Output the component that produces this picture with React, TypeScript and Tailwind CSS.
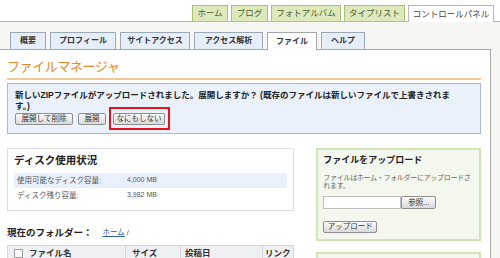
import React from "react";

const font = { fontFamily: '"Liberation Sans", "Noto Sans CJK JP", sans-serif' };

function TopTab({ label, w, active }: { label: string; w: string; active?: boolean }) {
  return (
    <div
      className={
        "flex items-center justify-center text-[8.5px] leading-none border border-b-0 " +
        w +
        " " +
        (active
          ? "h-[17px] -mb-px relative z-10 bg-white border-[#b8b8b8] text-[#444]"
          : "h-[16px] bg-[#dce9bb] border-[#a6c273] text-[#4d5d33]")
      }
    >
      {label}
    </div>
  );
}

function SubTab({ label, active, w }: { label: string; active?: boolean; w: string }) {
  return (
    <div
      className={
        "flex items-center justify-center text-[8px] font-bold leading-none border border-b-0 " +
        w +
        " " +
        (active
          ? "h-[18px] -mb-px relative z-10 bg-white border-[#a8a8a8] text-[#333]"
          : "h-[17px] bg-[#e6eefa] border-[#9aa7b8] text-[#333]")
      }
    >
      {label}
    </div>
  );
}

function Btn({ label, className = "" }: { label: string; className?: string }) {
  return (
    <div
      className={
        "flex items-center justify-center text-[7.5px] leading-none text-[#333] bg-gradient-to-b from-[#fbfbfb] to-[#dadada] border border-[#8f8f8f] rounded-[2px] " +
        className
      }
    >
      {label}
    </div>
  );
}

export default function App() {
  return (
    <div className="w-[500px] h-[258px] overflow-hidden bg-white" style={font}>
      {/* top tabs */}
      <div className="h-[22px] flex items-end justify-end gap-[3px] pr-[6px] border-b border-[#b8b8b8]">
        <TopTab label="ホーム" w="w-[36px]" />
        <TopTab label="ブログ" w="w-[37px]" />
        <TopTab label="フォトアルバム" w="w-[70px]" />
        <TopTab label="タイプリスト" w="w-[61px]" />
        <TopTab label="コントロールパネル" w="w-[86px]" active />
      </div>
      {/* sub tabs band */}
      <div className="bg-[#f6f7f2] h-[27px] flex items-end gap-[4px] pl-[10px]">
        <SubTab label="概要" w="w-[36px]" />
        <SubTab label="プロフィール" w="w-[66px]" />
        <SubTab label="サイトアクセス" w="w-[70px]" />
        <SubTab label="アクセス解析" w="w-[69px]" />
        <SubTab label="ファイル" w="w-[50px]" active />
        <SubTab label="ヘルプ" w="w-[44px]" />
      </div>
      <div className="flex bg-[#f6f7f2]">
        {/* content */}
        <div className="w-[491px] h-[220px] bg-white border-t border-r border-[#a8a8a8] pl-[7px] pr-[9px] pt-[9px]">
          <div className="text-[13px] leading-[16px] tracking-[-0.4px] text-[#e8872a] border-b-2 border-[#f3c897] pb-[3px]">
            ファイルマネージャ
          </div>
          <div className="mt-[3px] h-[51px] bg-[#eaf1fb] border border-[#a9b9d1] pl-[7px] pr-[4px] pt-[6px]">
            <div className="text-[8.5px] leading-[11px] font-bold text-[#222]">
              <div className="whitespace-nowrap">
                新しいZIPファイルがアップロードされました。展開しますか？ (既存のファイルは新しいファイルで上書きされま
              </div>
              <div>す。)</div>
            </div>
            <div className="flex items-center mt-[1px]">
              <Btn label="展開して削除" className="w-[58px] h-[12px]" />
              <Btn label="展開" className="ml-[5px] w-[28px] h-[12px]" />
              <div className="ml-[7px] relative">
                <Btn label="なにもしない" className="w-[52px] h-[12px]" />
                <div className="absolute left-[-4px] right-[-5px] top-[-6px] bottom-[-5px] border-2 border-[#e8101a]" />
              </div>
            </div>
          </div>
          <div className="flex gap-[22px] mt-[14px]">
            <div className="w-[288px] flex flex-col">
              <div className="h-[63px] border border-[#dedede] px-[6px] pt-[5px]">
                <div className="text-[10.5px] leading-[13px] font-bold text-[#222]">ディスク使用状況</div>
                <div className="mt-[6px] flex flex-col text-[7.5px] text-[#555]">
                  <div className="h-[15px] bg-[#eaf0fb] flex items-center pl-[3px]">
                    <span className="w-[110px]">使用可能なディスク容量:</span>
                    <span className="text-[7px]">4,000 MB</span>
                  </div>
                  <div className="h-[15px] flex items-center pl-[3px]">
                    <span className="w-[110px]">ディスク残り容量:</span>
                    <span className="text-[7px]">3,982 MB</span>
                  </div>
                </div>
              </div>
              <div className="mt-[15px] h-[14px] flex items-center text-[9.5px] font-bold text-[#222] leading-none">
                <span>現在のフォルダー：</span>
                <span className="ml-[10px] text-[7.5px] font-normal text-[#2b5fa6] underline">ホーム</span>
                <span className="ml-[2px] text-[7.5px] font-normal text-[#555]">/</span>
              </div>
              <div className="mt-[5px] h-[16px] bg-[#eef0f3] border border-[#d6d8dc] flex items-center text-[8.5px] font-bold text-[#333]">
                <div className="w-[18px] h-full flex items-center justify-center pl-[2px]">
                  <div className="w-[9px] h-[9px] border border-[#a0a0a0] bg-[#f8f8f8]" />
                </div>
                <div className="w-[100px] h-full flex items-center pl-[3px] border-r border-[#d6d8dc]">ファイル名</div>
                <div className="w-[55px] h-full flex items-center pl-[6px] border-r border-[#d6d8dc]">サイズ</div>
                <div className="w-[82px] h-full flex items-center pl-[4px] border-r border-[#d6d8dc]">投稿日</div>
                <div className="flex-1 h-full flex items-center pl-[2px]">リンク</div>
              </div>
            </div>
            <div className="w-[165px] flex flex-col gap-[11px]">
              <div className="h-[93px] bg-[#f3f7ee] border-2 border-[#d0e4b6] pl-[5px] pr-[2px] pt-[4px]">
                <div className="text-[9px] leading-[12px] font-bold text-[#222]">ファイルをアップロード</div>
                <div className="mt-[8px] text-[7px] leading-[8px] tracking-[-0.3px] text-[#666]">
                  ファイルはホーム・フォルダーにアップロードされます。
                </div>
                <div className="mt-[6px] flex items-center">
                  <div className="w-[78px] h-[13px] bg-white border border-[#bdbdbd]" />
                  <Btn label="参照..." className="w-[35px] h-[13px]" />
                </div>
                <Btn label="アップロード" className="mt-[12px] w-[54px] h-[12px]" />
              </div>
              <div className="h-[40px] bg-[#f3f7ee] border-2 border-[#d0e4b6]" />
            </div>
          </div>
        </div>
        <div className="flex-1" />
      </div>
    </div>
  );
}
